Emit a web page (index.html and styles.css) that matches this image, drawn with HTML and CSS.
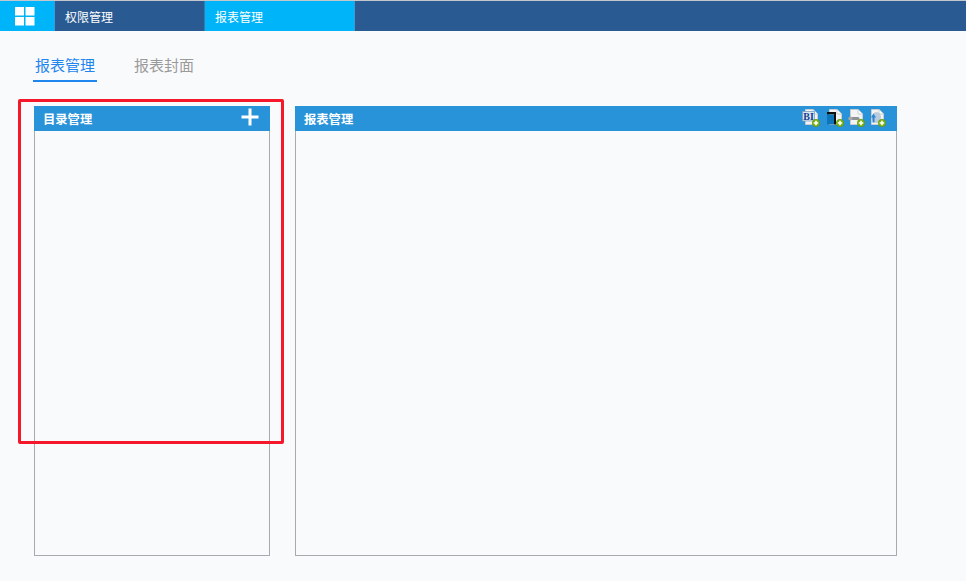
FILE: index.html
```
<!DOCTYPE html>
<html lang="zh">
<head>
<meta charset="utf-8">
<title>报表管理</title>
<link rel="stylesheet" href="styles.css">
</head>
<body>
<svg class="defs" width="0" height="0" aria-hidden="true">
  <defs>
    <g id="doc">
      <path d="M3.500 .5H11L15.500 5V15.500H3.500Z" fill="#f4f4f4" stroke="#c9cdd0" stroke-width="1"/>
      <path d="M11 .5V5H15.500" fill="#fff" stroke="#c9cdd0" stroke-width="1"/>
    </g>
    <g id="plus">
      <circle cx="14" cy="14" r="3.700" fill="#7cb518" stroke="#5d8f0c" stroke-width=".6"/>
      <path d="M14 11.800V16.200M11.800 14H16.200" stroke="#fff" stroke-width="1.600"/>
    </g>
  </defs>
</svg>
<header class="topbar">
  <div class="logo">
    <svg width="20" height="19" viewBox="0 0 20 19" aria-hidden="true">
      <rect x="0" y="0" width="9" height="8.500" fill="#fff"/>
      <rect x="10.500" y="0" width="9" height="8.500" fill="#fff"/>
      <rect x="0" y="10" width="9" height="8.500" fill="#fff"/>
      <rect x="10.500" y="10" width="9" height="8.500" fill="#fff"/>
    </svg>
  </div>
  <a class="nav-item">权限管理</a>
  <a class="nav-item nav-active">报表管理</a>
</header>
<main class="page">
  <nav class="tabs">
    <span class="tab tab-active">报表管理</span>
    <span class="tab">报表封面</span>
  </nav>
  <div class="panels">
    <section class="panel panel-left">
      <div class="panel-head">
        <span>目录管理</span>
        <svg class="add" width="18" height="18" viewBox="0 0 18 18" aria-hidden="true">
          <path d="M9 .5V17.500M.5 9H17.500" stroke="#fff" stroke-width="3"/>
        </svg>
      </div>
    </section>
    <section class="panel panel-right">
      <div class="panel-head">
        <span>报表管理</span>
        <div class="tools">
          <svg class="tool" width="18" height="18" viewBox="0 0 18 18" aria-hidden="true">
            <use href="#doc"/>
            <rect x="0.500" y="2.500" width="12" height="9.500" fill="#dbe7f3" stroke="#7f9dbd" stroke-width=".8"/>
            <text class="bi" x="6.500" y="10.500" text-anchor="middle">BI</text>
            <use href="#plus"/>
          </svg>
          <svg class="tool tool-wide" width="18" height="18" viewBox="0 0 18 18" aria-hidden="true">
            <use href="#doc"/>
            <path d="M1 3H10V15.500H8V5.500H1Z" fill="#111"/>
            <rect x="1" y="5.500" width="7" height="10" fill="#0d76b8"/>
            <use href="#plus"/>
          </svg>
          <svg class="tool" width="18" height="18" viewBox="0 0 18 18" aria-hidden="true">
            <use href="#doc"/>
            <path d="M2.500 9.500H11" stroke="#8f9396" stroke-width="3" stroke-linecap="round"/>
            <circle cx="3.500" cy="9.500" r="1.900" fill="#a6aaad"/>
            <use href="#plus"/>
          </svg>
          <svg class="tool" width="18" height="18" viewBox="0 0 18 18" aria-hidden="true">
            <use href="#doc"/>
            <ellipse cx="8.500" cy="8.500" rx="4.500" ry="5.500" fill="#b9cbdc"/>
            <path d="M3 8.500 5.500 4.500 8 8.500H6.500V13.500H4.500V8.500Z" fill="#2c86cf"/>
            <use href="#plus"/>
          </svg>
        </div>
      </div>
    </section>
    <div class="highlight"></div>
  </div>
</main>
</body>
</html>
```

FILE: styles.css
```
* {
  box-sizing: border-box;
}

html,
body {
  margin: 0;
  height: 100%;
}

body {
  background: #f9fafc;
  font-family: "Noto Sans CJK SC", "Liberation Sans", sans-serif;
  overflow: hidden;
}

.defs {
  display: block;
  height: 0;
}

.topbar {
  display: flex;
  height: 31px;
  background: #295a92;
  border-top: 1px solid #c4c8cc;
}

.logo {
  display: flex;
  width: 55px;
  padding-left: 15px;
  align-items: center;
  background: #00b4fa;
  border-right: 1px solid #3f9ad3;
}

.logo svg {
  margin-top: 1px;
}

.nav-item {
  display: flex;
  width: 150px;
  padding-left: 10px;
  align-items: center;
  color: #fff;
  font-size: 12px;
  border-right: 1px solid #3f79ab;
}

.nav-active {
  background: #00b4fa;
  border-right-color: #3f9ad3;
}

.page {
  padding: 0 69px 0 34px;
}

.tabs {
  display: flex;
  gap: 35px;
  height: 51px;
  padding-top: 22px;
  margin-left: -1px;
}

.tab {
  height: 29px;
  padding: 0 2px;
  color: #9a9a9a;
  font-size: 15px;
  line-height: 23px;
  white-space: nowrap;
}

.tab-active {
  color: #1e86ee;
  border-bottom: 2px solid #1e86ee;
}

.panels {
  position: relative;
  display: flex;
  gap: 25px;
  height: 450px;
  margin-top: 24px;
}

.panel {
  border: 1px solid #a6abaf;
  border-top: 0;
}

.panel-left {
  width: 236px;
}

.panel-right {
  width: 602px;
}

.panel-head {
  display: flex;
  height: 25px;
  margin: 0 -1px;
  padding: 0 10px 0 9px;
  align-items: center;
  justify-content: space-between;
  background: #2993d9;
  color: #fff;
  font-size: 12.3px;
  font-weight: 700;
}

.panel-left .panel-head {
  padding-right: 11px;
}

.tools {
  display: flex;
  gap: 3px;
  margin-right: 1px;
  margin-top: -1px;
}

.tool {
  display: block;
}

.tool-wide {
  margin-left: 3px;
}

.bi {
  fill: #123f8f;
  font-family: "Liberation Serif", serif;
  font-size: 10px;
  font-weight: 700;
}

.add {
  margin-top: -3px;
}

.highlight {
  position: absolute;
  left: -16.500px;
  top: -7px;
  width: 266px;
  height: 344.500px;
  border: 3px solid #f4182a;
  border-radius: 2px;
  pointer-events: none;
}
```
